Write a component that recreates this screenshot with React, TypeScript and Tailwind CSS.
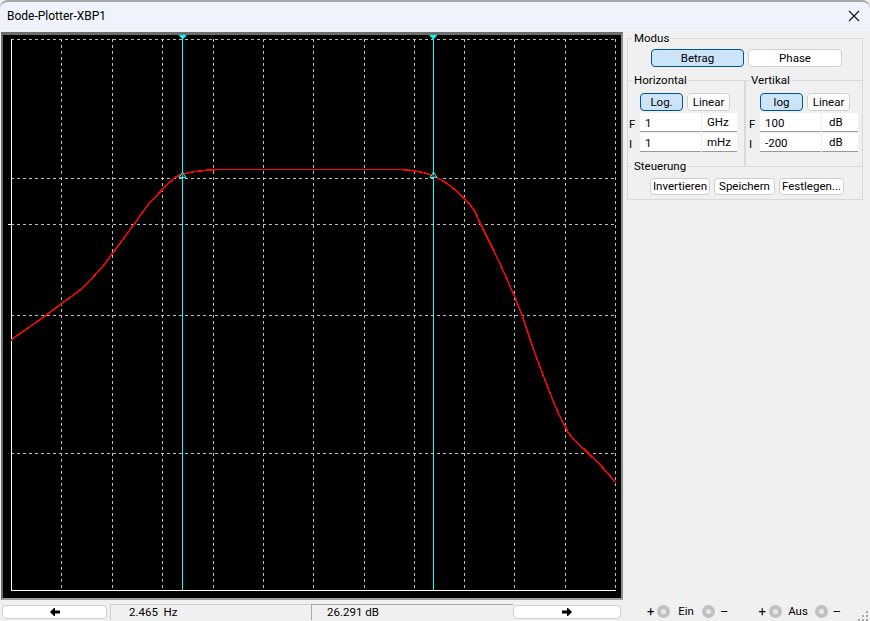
const font = { fontFamily: 'Roboto, "Noto Sans", sans-serif' }

const gridX = [61.5, 112.5, 162.5, 213.5, 263.5, 313.5, 364.5, 414.5, 464.5, 514.5, 565.5, 615.5]
const gridY = [39.5, 178.5, 224.5, 315.5, 453.5]

const curve: [number, number][] = [
  [11, 340], [28, 328], [45, 316], [61, 304], [80, 290], [95, 275], [104, 265], [112, 254], [124, 238], [135, 223],
  [148, 205], [162, 190], [171, 181], [176, 177], [183, 174], [192, 172], [200, 171], [210, 170], [240, 169.5],
  [380, 169.5], [407, 170], [417, 171.5], [425, 173], [433, 176], [443, 181], [454, 189], [464, 198], [474, 210],
  [480, 223], [492, 247], [502, 268], [513, 293], [522, 315], [532, 345], [545, 380], [557, 410], [566, 428],
  [570, 435], [587, 452], [603, 468], [615, 482],
]

// catmull-rom through the measured points, the curve has no hard corners
const curvePath = curve
  .map((p, i) => {
    if (i === 0) return `M${p[0]} ${p[1]}`
    const p0 = curve[Math.max(i - 2, 0)]
    const p1 = curve[i - 1]
    const p3 = curve[Math.min(i + 1, curve.length - 1)]
    const c1x = p1[0] + (p[0] - p0[0]) / 6
    const c1y = p1[1] + (p[1] - p0[1]) / 6
    const c2x = p[0] - (p3[0] - p1[0]) / 6
    const c2y = p[1] - (p3[1] - p1[1]) / 6
    return `C${c1x} ${c1y} ${c2x} ${c2y} ${p[0]} ${p[1]}`
  })
  .join(' ')

const Plot = () => (
  <div className="ml-[1px] mt-[1px] h-[568px] w-[622px] border-b-2 border-l-2 border-r-2 border-t-[3px] border-b-[#a0a0a0] border-l-[#6e6e6e] border-r-[#8c8c8c] border-t-[#6e6e6e] bg-black">
    <svg width="618" height="563" viewBox="3 35 618 563" className="block">
      <g stroke="#bdbdbd" strokeWidth="1" strokeDasharray="3 3" shapeRendering="crispEdges">
        {gridX.map(x => <line key={x} x1={x} x2={x} y1="39" y2="590" />)}
        {gridY.map(y => <line key={y} x1="11" x2="615" y1={y} y2={y} />)}
      </g>
      <g stroke="#ffffff" strokeWidth="1" shapeRendering="crispEdges">
        <line x1="11.5" x2="11.5" y1="39" y2="591" />
        <line x1="11" x2="616" y1="590.5" y2="590.5" />
        <line x1="8" x2="11" y1="224.5" y2="224.5" />
      </g>
      <g stroke="#00ffff" strokeWidth="1" shapeRendering="crispEdges">
        <line x1="182.5" x2="182.5" y1="35" y2="590" />
        <line x1="433.5" x2="433.5" y1="35" y2="590" />
      </g>
      <path d={curvePath} fill="none" stroke="#ff0000" strokeWidth="1.5" shapeRendering="crispEdges" />
      <polygon points="178.5,35 187,35 182.8,39.5" fill="#00ffff" />
      <polygon points="429,35 437.5,35 433.3,39.5" fill="#00ffff" />
      <polygon points="182.5,172 179,177.5 186,177.5" fill="none" stroke="#00ffff" strokeWidth="1" />
      <polygon points="433.5,172 430,177.5 437,177.5" fill="none" stroke="#00ffff" strokeWidth="1" />
    </svg>
  </div>
)

const Btn = ({ label, active, className }: { label: string; active?: boolean; className: string }) => (
  <div
    className={`flex items-center justify-center rounded-[4px] border pt-[1px] text-[11.5px] leading-none text-black ${
      active ? 'border-[#005499] bg-[#cce4f7]' : 'border-[#d0d0d0] bg-white'
    } ${className}`}
  >
    {label}
  </div>
)

const Field = ({ name, value, unit, unitClass }: { name: string; value: string; unit: string; unitClass: string }) => (
  <div className="flex h-[19px] items-center text-[11.5px] text-black">
    <span className="w-[12px] pl-[1px] pt-[4px] leading-none">{name}</span>
    <div className="flex h-[19px] w-[61px] items-center border-b border-b-[#9a9a9a] bg-white pl-[5px] pt-[3px] leading-none">
      {value}
    </div>
    <div className={`ml-[1px] flex h-[19px] items-center border-b border-b-[#9a9a9a] bg-white pt-[1px] leading-none ${unitClass}`}>
      {unit}
    </div>
  </div>
)

const legendClass = 'ml-[4px] px-[2px] text-[11.5px] leading-[14px] text-black'

const Panel = () => (
  <div className="ml-[4px] w-[236px]">
    <fieldset className="h-[49px] border border-b-0 border-[#d9d9d9]">
      <legend className={legendClass}>Modus</legend>
      <div className="ml-[23px] mt-[4px] flex gap-[4px]">
        <Btn label="Betrag" active className="h-[18px] w-[93px]" />
        <Btn label="Phase" className="h-[18px] w-[94px]" />
      </div>
    </fieldset>
    <div className="-mt-[7px] flex">
      <fieldset className="h-[93px] w-[119px] border border-b-0 border-r-2 border-[#d9d9d9]">
        <legend className={legendClass}>Horizontal</legend>
        <div className="ml-[12px] mt-[6px] flex gap-[4px]">
          <Btn label="Log." active className="h-[18px] w-[43px]" />
          <Btn label="Linear" className="h-[18px] w-[43px]" />
        </div>
        <div className="mt-[2px] flex flex-col gap-[1px]">
          <Field name="F" value="1" unit="GHz" unitClass="w-[35px] pl-[5px]" />
          <Field name="I" value="1" unit="mHz" unitClass="w-[35px] pl-[5px]" />
        </div>
      </fieldset>
      <fieldset className="-ml-[1px] h-[93px] w-[118px] border-r border-t border-[#d9d9d9]">
        <legend className={legendClass}>Vertikal</legend>
        <div className="ml-[15px] mt-[6px] flex gap-[4px]">
          <Btn label="log" active className="h-[18px] w-[43px]" />
          <Btn label="Linear" className="h-[18px] w-[43px]" />
        </div>
        <div className="ml-[3px] mt-[2px] flex flex-col gap-[1px]">
          <Field name="F" value="100" unit="dB" unitClass="w-[36px] pl-[7px]" />
          <Field name="I" value="-200" unit="dB" unitClass="w-[36px] pl-[7px]" />
        </div>
      </fieldset>
    </div>
    <fieldset className="-mt-[7px] h-[41px] border border-[#d9d9d9]">
      <legend className={legendClass}>Steuerung</legend>
      <div className="ml-[22px] mt-[5px] flex gap-[4px]">
        <Btn label="Invertieren" className="h-[17px] w-[60px]" />
        <Btn label="Speichern" className="h-[17px] w-[61px]" />
        <Btn label="Festlegen..." className="h-[17px] w-[65px]" />
      </div>
    </fieldset>
  </div>
)

const Arrow = ({ right }: { right?: boolean }) => (
  <svg width="10" height="8" viewBox="0 0 10 8" className={right ? '' : 'rotate-180'}>
    <polygon points="0,2.5 5,2.5 5,0 6,0 10,4 6,8 5,8 5,5.5 0,5.5" fill="#000000" />
  </svg>
)

const Knob = () => (
  <span className="flex h-[13px] w-[13px] items-center justify-center rounded-full bg-[#c0c0c0]">
    <span className="h-[5px] w-[5px] rounded-full bg-[#e8e8e8]" />
  </span>
)

const Terminal = ({ name, nameWidth }: { name: string; nameWidth: string }) => (
  <div className="flex items-center text-[11.5px] leading-none text-black">
    <span className="w-[9px] text-[13px]">+</span>
    <span className="ml-[1px]"><Knob /></span>
    <span className={`text-center ${nameWidth}`}>{name}</span>
    <Knob />
    <span className="ml-[5px] text-[13px]">–</span>
  </div>
)

const BottomBar = () => (
  <div className="flex h-[21px] w-[870px] items-center pt-[2px] text-[11.5px] text-black">
    <div className="ml-[2px] flex h-[14px] w-[105px] items-center justify-center rounded-[4px] border border-[#d0d0d0] bg-white">
      <Arrow />
    </div>
    <div className="ml-[3px] flex h-[16px] w-[201px] items-center border-l border-t border-[#d0d0d0] pl-[18px] pt-[1px] leading-none">
      2.465&nbsp; Hz
    </div>
    <div className="flex h-[16px] w-[202px] items-center border-l border-t border-[#a8a8a8] pl-[15px] pt-[1px] leading-none">
      26.291 dB
    </div>
    <div className="flex h-[14px] w-[108px] items-center justify-center rounded-[4px] border border-[#d0d0d0] bg-white">
      <Arrow right />
    </div>
    <div className="ml-[26px]">
      <Terminal name="Ein" nameWidth="w-[32px]" />
    </div>
    <div className="ml-[30px]">
      <Terminal name="Aus" nameWidth="w-[33px]" />
    </div>
  </div>
)

const Grip = () => (
  <svg width="12" height="10" viewBox="0 0 12 10" className="absolute bottom-0 right-[1px]">
    <g fill="#a8a8a8">
      <rect x="9" y="0" width="2" height="2" />
      <rect x="5" y="4" width="2" height="2" />
      <rect x="9" y="4" width="2" height="2" />
      <rect x="1" y="8" width="2" height="2" />
      <rect x="5" y="8" width="2" height="2" />
      <rect x="9" y="8" width="2" height="2" />
    </g>
  </svg>
)

export default function App() {
  return (
    <div className="relative h-[621px] w-[870px] overflow-hidden bg-[#f0f0f0]" style={font}>
      <div className="flex h-[31px] items-center justify-between rounded-t-[8px] border-t-2 border-t-[#a6a6a6] bg-[#eff3fb] pb-[1px] pl-[7px] pr-[10px]">
        <span className="text-[12px] leading-none text-black">Bode-Plotter-XBP1</span>
        <svg width="12" height="12" viewBox="0 0 12 12">
          <path d="M1 1 L11 11 M11 1 L1 11" stroke="#111111" strokeWidth="1.1" fill="none" />
        </svg>
      </div>
      <div className="flex h-[569px]">
        <Plot />
        <Panel />
      </div>
      <BottomBar />
      <Grip />
    </div>
  )
}
